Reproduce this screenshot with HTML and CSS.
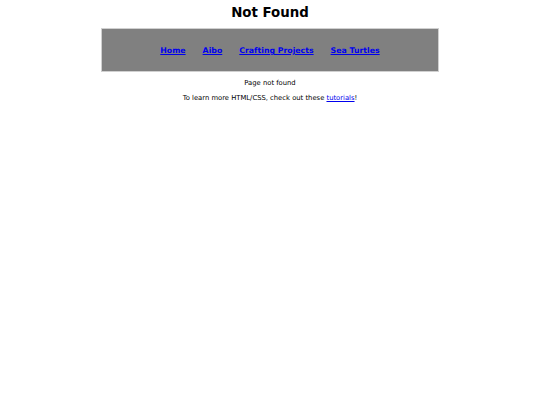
FILE: index.html
```html
<!DOCTYPE html>
<html>
<head>
<meta charset="utf-8">
<title>Not Found</title>
<link rel="stylesheet" href="styles.css">
</head>
<body>
<h1 class="title">Not Found</h1>
<nav class="nav">
  <a href="#">Home</a>
  <a href="#">Aibo</a>
  <a href="#">Crafting Projects</a>
  <a href="#">Sea Turtles</a>
</nav>
<p class="msg">Page not found</p>
<p class="msg">To learn more HTML/CSS, check out these <a href="#">tutorials</a>!</p>
</body>
</html>
```
FILE: styles.css
```css
html, body {
  margin: 0;
  background: #fff;
}
body {
  padding-top: 5px;
  font-family: "DejaVu Sans", sans-serif;
  font-size: 6.8px;
  color: #000;
}
.title {
  margin: 0 0 7px;
  font-size: 13.33px;
  line-height: 16px;
  font-weight: bold;
  text-align: center;
}
.nav {
  box-sizing: border-box;
  width: 338px;
  height: 44px;
  margin: 0 auto;
  padding-top: 1px;
  background: #808080;
  border: 1px solid #d0d0d0;
  display: flex;
  justify-content: center;
  align-items: center;
  gap: 17px;
}
.nav a {
  font-size: 7.8px;
  font-weight: bold;
  color: #0000ee;
}
.msg {
  margin: 7px 0 0;
  line-height: 8px;
  text-align: center;
}
.msg a {
  color: #0000ee;
}
```
